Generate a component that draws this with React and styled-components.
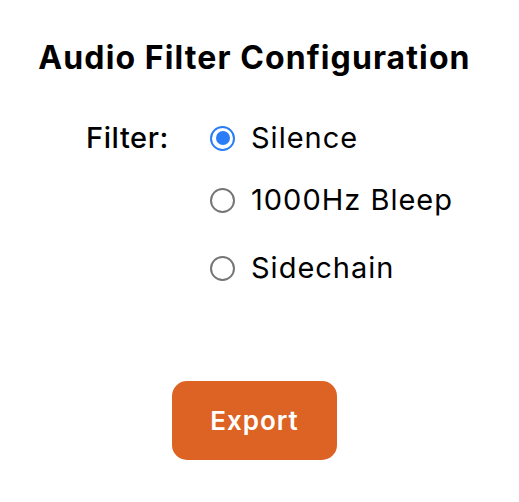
import { useState } from "react";
import styled, { createGlobalStyle } from "styled-components";

const GlobalStyle = createGlobalStyle`
  html, body {
    margin: 0;
    padding: 0;
    background: #fff;
  }
  body {
    font-family: Inter, "Liberation Sans", sans-serif;
    color: #000;
  }
`;

const Page = styled.main`
  display: flex;
  flex-direction: column;
  align-items: center;
  width: 509px;
  padding-top: 38px;
  box-sizing: border-box;
`;

const Title = styled.h1`
  margin: 0;
  font-size: 32px;
  font-weight: 700;
  letter-spacing: 1.1px;
  line-height: 40px;
`;

const FilterRow = styled.div`
  display: flex;
  align-items: flex-start;
  align-self: flex-start;
  margin: 44px 0 0 86px;
`;

const Label = styled.span`
  width: 124px;
  font-size: 29px;
  font-weight: 500;
  letter-spacing: 0.6px;
  line-height: 32px;
`;

const Options = styled.div`
  display: flex;
  flex-direction: column;
  gap: 30px;
`;

const Option = styled.label`
  display: flex;
  align-items: center;
  gap: 16px;
  font-size: 29px;
  letter-spacing: 1px;
  line-height: 32px;
  height: 32px;
  cursor: pointer;
  margin-top: ${(p) => p.$offset || 0}px;
`;

const Radio = styled.input`
  appearance: none;
  margin: 0;
  width: 25px;
  height: 25px;
  border-radius: 50%;
  border: 2px solid #767676;
  box-sizing: border-box;
  background: #fff;
  display: grid;
  place-items: center;

  &:checked {
    border-color: #2a7df6;
  }
  &:checked::after {
    content: "";
    width: 14px;
    height: 14px;
    border-radius: 50%;
    background: #2a7df6;
  }
`;

const ExportButton = styled.button`
  margin-top: 97px;
  width: 165px;
  height: 79px;
  border: none;
  border-radius: 15px;
  background: #dd6325;
  color: #fff;
  font-family: inherit;
  font-size: 26px;
  font-weight: 600;
  letter-spacing: 1px;
  cursor: pointer;
`;

const filters = ["Silence", "1000Hz Bleep", "Sidechain"];

const App = () => {
  const [filter, setFilter] = useState("Silence");
  return (
    <Page>
      <GlobalStyle />
      <Title>Audio Filter Configuration</Title>
      <FilterRow>
        <Label>Filter:</Label>
        <Options>
          {filters.map((f, i) => (
            <Option key={f} $offset={i === 2 ? 6 : 0}>
              <Radio
                type="radio"
                name="filter"
                checked={filter === f}
                onChange={() => setFilter(f)}
              />
              {f}
            </Option>
          ))}
        </Options>
      </FilterRow>
      <ExportButton>Export</ExportButton>
    </Page>
  );
};

export default App;
